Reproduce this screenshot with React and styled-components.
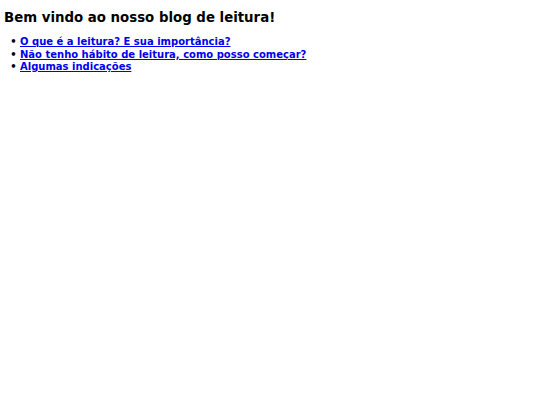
import React from 'react';
import styled, { createGlobalStyle } from 'styled-components';

const GlobalStyle = createGlobalStyle`
    body {
        margin: 4px;
        background: #ffffff;
        font-family: "DejaVu Sans", sans-serif;
    }
`

const Page = styled.div`
    width: 100%;
`

const Title = styled.h1`
    font-size: 13.33px;
    font-weight: bold;
    color: #000000;
    margin: 6px 0 11px 0;
`

const List = styled.ul`
    margin: 0;
    padding-left: 16px;
    list-style: disc;
`

const Item = styled.li`
    font-size: 10px;
    font-weight: bold;
    line-height: 12.5px;

    &::marker {
        content: "• ";
        color: #000000;
    }
`

const Link = styled.a`
    color: #0000ee;
    text-decoration: underline;
`

const links = [
    'O que é a leitura? E sua importância?',
    'Não tenho hábito de leitura, como posso começar?',
    'Algumas indicações'
]

export default function App() {
    return (
        <Page>
            <GlobalStyle />
            <Title>Bem vindo ao nosso blog de leitura!</Title>
            <List>
                {links.map((text) => (
                    <Item key={text}>
                        <Link href="#">{text}</Link>
                    </Item>
                ))}
            </List>
        </Page>
    );
}
